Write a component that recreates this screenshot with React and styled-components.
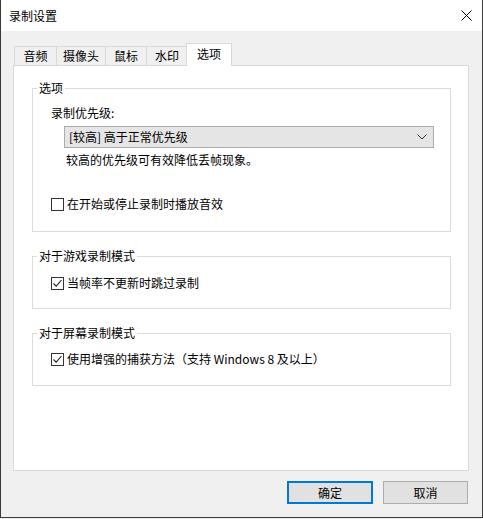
import React from 'react';
import styled, { createGlobalStyle } from 'styled-components';

const GlobalStyle = createGlobalStyle`
  html, body {
    margin: 0;
    padding: 0;
    background: #f0f0f0;
  }
  * {
    box-sizing: border-box;
  }
`;

const tabs = ['音频', '摄像头', '鼠标', '水印', '选项'];
const tabWidths = [42, 49, 41, 41, 46];

const App = () => {
  return (
    <>
      <GlobalStyle />
      <Window>
        <TitleBar>
          <Title>录制设置</Title>
          <CloseButton>
            <svg width="11" height="11" viewBox="0 0 11 11">
              <path d="M0.5 0.5 L10.5 10.5 M10.5 0.5 L0.5 10.5" stroke="#000" strokeWidth="1" fill="none" />
            </svg>
          </CloseButton>
        </TitleBar>
        <Body>
          <TabRow>
            {tabs.map((t, i) => (
              <Tab key={t} active={i === tabs.length - 1} w={tabWidths[i]}>{t}</Tab>
            ))}
          </TabRow>
          <Panel>
            <Group>
              <Legend>选项</Legend>
              <FieldLabel>录制优先级:</FieldLabel>
              <Select>
                <span>[较高] 高于正常优先级</span>
                <svg width="10" height="6" viewBox="0 0 10 6">
                  <path d="M0.5 0.5 L5 5 L9.5 0.5" stroke="#333" strokeWidth="1" fill="none" />
                </svg>
              </Select>
              <Hint>较高的优先级可有效降低丢帧现象。</Hint>
              <CheckRow top={28}>
                <Box />
                <span>在开始或停止录制时播放音效</span>
              </CheckRow>
            </Group>

            <Group gap={16} bottom={17}>
              <Legend>对于游戏录制模式</Legend>
              <CheckRow top={11}>
                <Box checked />
                <span>当帧率不更新时跳过录制</span>
              </CheckRow>
            </Group>

            <Group gap={16} bottom={18}>
              <Legend>对于屏幕录制模式</Legend>
              <CheckRow top={10}>
                <Box checked />
                <span>使用增强的捕获方法（支持 Windows 8 及以上）</span>
              </CheckRow>
            </Group>
          </Panel>
          <Footer>
            <Button primary>确定</Button>
            <Button>取消</Button>
          </Footer>
        </Body>
      </Window>
    </>
  );
};

const Box = ({ checked }) => (
  <CheckBox>
    {checked && (
      <svg width="11" height="11" viewBox="0 0 11 11">
        <path d="M1.5 5.5 L4.2 8.2 L9.5 2" stroke="#222" strokeWidth="1.1" fill="none" />
      </svg>
    )}
  </CheckBox>
);

const Window = styled.div`
  width: 483px;
  height: 518px;
  display: flex;
  flex-direction: column;
  background: #f0f0f0;
  border-left: 1px solid #3a3a3a;
  border-right: 1px solid #3a3a3a;
  border-bottom: 1px solid #3a3a3a;
  font-family: "Noto Sans CJK SC", "Noto Sans", sans-serif;
  font-size: 12px;
  color: #000;
`;

const TitleBar = styled.div`
  height: 31px;
  flex-shrink: 0;
  background: #fff;
  display: flex;
  align-items: center;
  justify-content: space-between;
  padding-left: 8px;
`;

const Title = styled.div`
  font-size: 12px;
  line-height: 16px;
`;

const CloseButton = styled.div`
  width: 46px;
  height: 31px;
  display: flex;
  align-items: center;
  justify-content: center;
  margin-right: -7px;
`;

const Body = styled.div`
  flex: 1;
  display: flex;
  flex-direction: column;
  padding: 12px 13px 0 12px;
`;

const TabRow = styled.div`
  position: relative;
  z-index: 1;
  height: 23px;
  margin-bottom: -1px;
  margin-left: 1px;
  display: flex;
  align-items: flex-end;
`;

const Tab = styled.div`
  width: ${p => p.w}px;
  height: ${p => (p.active ? 23 : 20)}px;
  display: flex;
  align-items: center;
  justify-content: center;
  padding-bottom: ${p => (p.active ? 2 : 0)}px;
  line-height: 16px;
  background: ${p => (p.active ? '#fff' : '#f0f0f0')};
  border: 1px solid #d9d9d9;
  border-right: ${p => (p.active ? '1px solid #d9d9d9' : 'none')};
  border-bottom: ${p => (p.active ? 'none' : '1px solid #d9d9d9')};
  margin-left: ${p => (p.active ? -1 : 0)}px;
`;

const Panel = styled.div`
  flex: 1;
  background: #fff;
  border: 1px solid #d9d9d9;
  padding: 14px 17px 0 18px;
`;

const Group = styled.fieldset`
  margin: ${p => p.gap || 0}px 0 0 0;
  padding: 0 16px ${p => p.bottom || 19}px 18px;
  border: 1px solid #dcdcdc;
  min-inline-size: 0;
`;

const Legend = styled.legend`
  padding: 0 2px;
  margin-left: -14px;
  line-height: 16px;
  font-size: 12px;
`;

const FieldLabel = styled.div`
  margin-top: 9px;
  line-height: 16px;
`;

const Select = styled.div`
  margin: 5px 0 0 13px;
  height: 22px;
  display: flex;
  align-items: center;
  justify-content: space-between;
  padding: 0 6px 0 4px;
  background: #e5e5e5;
  border: 1px solid #acacac;
  line-height: 16px;
`;

const Hint = styled.div`
  margin: 4px 0 0 15px;
  line-height: 16px;
`;

const CheckRow = styled.div`
  margin-top: ${p => p.top}px;
  display: flex;
  align-items: center;
  gap: 3px;
  line-height: 16px;
`;

const CheckBox = styled.div`
  width: 13px;
  height: 13px;
  flex-shrink: 0;
  border: 1px solid #333;
  background: #fff;
  display: flex;
  align-items: center;
  justify-content: center;
`;

const Footer = styled.div`
  height: 46px;
  flex-shrink: 0;
  display: flex;
  justify-content: flex-end;
  gap: 10px;
  padding: 10px 1px 0 0;
`;

const Button = styled.div`
  width: ${p => (p.primary ? 86 : 85)}px;
  height: 23px;
  display: flex;
  align-items: center;
  justify-content: center;
  background: #e1e1e1;
  border: ${p => (p.primary ? '2px solid #0078d7' : '1px solid #adadad')};
  line-height: 16px;
`;

export default App;
